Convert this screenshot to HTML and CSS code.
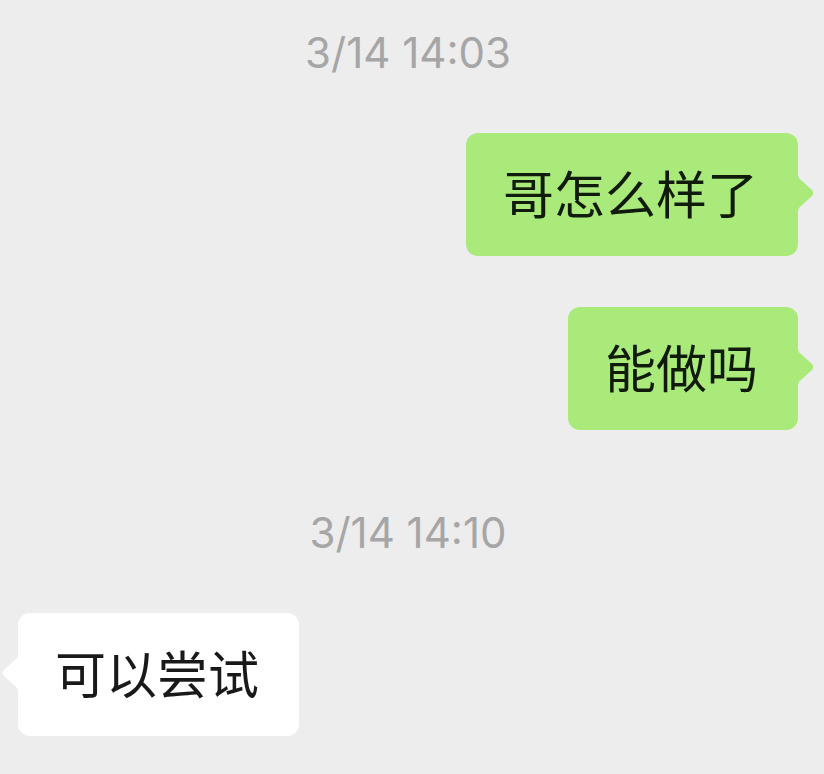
FILE: index.html
```html
<!DOCTYPE html>
<html lang="zh-CN">
<head>
<meta charset="utf-8">
<meta name="viewport" content="width=device-width, initial-scale=1">
<title>聊天</title>
<link rel="stylesheet" href="styles.css">
</head>
<body>
<main class="chat">
  <time class="stamp">3/14 14:03</time>
  <div class="message sent">
    <p class="bubble">哥怎么样了</p>
    <svg class="tail" viewBox="0 0 16 36" aria-hidden="true"><path d="M0 0Q0 3 3 5L13.500 14.500Q17 18 13.500 21.500L3 31Q0 33 0 36Z"/></svg>
  </div>
  <div class="message sent">
    <p class="bubble">能做吗</p>
    <svg class="tail" viewBox="0 0 16 36" aria-hidden="true"><path d="M0 0Q0 3 3 5L13.500 14.500Q17 18 13.500 21.500L3 31Q0 33 0 36Z"/></svg>
  </div>
  <time class="stamp stamp-later">3/14 14:10</time>
  <div class="message received">
    <svg class="tail" viewBox="0 0 16 36" aria-hidden="true"><path d="M16 0Q16 3 13 5L2.500 14.500Q-1 18 2.500 21.500L13 31Q16 33 16 36Z"/></svg>
    <p class="bubble">可以尝试</p>
  </div>
</main>
</body>
</html>
```
FILE: styles.css
```css
* {
  box-sizing: border-box;
}

body {
  margin: 0;
  background: #ededed;
  color: #191919;
  font-family: "Noto Sans CJK SC", sans-serif;
}

.chat {
  display: flex;
  flex-direction: column;
  padding: 29px 10px 38px 2px;
}

.stamp {
  align-self: center;
  margin-bottom: 56px;
  color: #a6a6a6;
  font-family: Inter, "Liberation Sans", sans-serif;
  font-size: 42px;
  line-height: 48px;
}

.stamp-later {
  margin-top: 28px;
}

.message {
  display: flex;
  align-items: center;
}

.sent {
  justify-content: flex-end;
  margin-bottom: 51px;
}

.bubble {
  margin: 0;
  padding: 23px 40px 28px 37px;
  border-radius: 12px;
  font-size: 51px;
  line-height: 72px;
}

.tail {
  flex: none;
  width: 16px;
  height: 36px;
  margin-bottom: 3px;
}

.sent .bubble {
  background: #a9ea7a;
  color: #111b0c;
}

.sent .tail {
  fill: #a9ea7a;
}

.received .bubble {
  background: #fff;
}

.received .tail {
  fill: #fff;
}
```
